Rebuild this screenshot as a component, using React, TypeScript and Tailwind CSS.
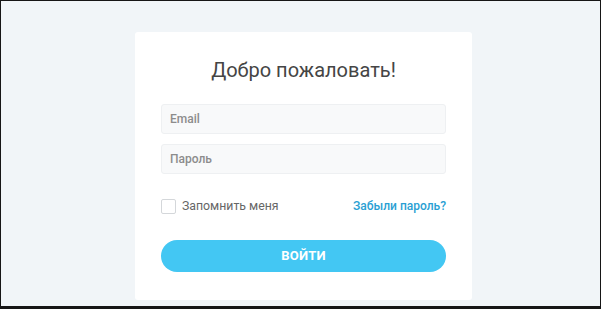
export default function App() {
  return (
    <div
      className="box-border w-[601px] h-[309px] border-t border-l border-r border-b-[3px] border-[#161616] bg-[#f1f5f8] pl-[134px] pt-[31px]"
      style={{ fontFamily: "Roboto, 'Noto Sans', sans-serif" }}
    >
      {/* Card */}
      <div className="w-[337px] h-[268px] bg-white rounded-[3px] px-[26px] pt-[24px]">
        <h1 className="text-[20px] leading-[28px] text-[#454545] text-center font-normal">
          Добро пожаловать!
        </h1>

        <div className="mt-[20px] flex flex-col gap-[10px]">
          <input
            type="email"
            placeholder="Email"
            className="h-[30px] w-full rounded-[3px] border border-[#eef0f2] bg-[#f8f9fa] px-[8px] text-[12px] font-medium text-[#555] placeholder:text-[#8c8c8c] outline-none"
          />
          <input
            type="password"
            placeholder="Пароль"
            className="h-[30px] w-full rounded-[3px] border border-[#eef0f2] bg-[#f8f9fa] px-[8px] text-[12px] font-medium text-[#555] placeholder:text-[#8c8c8c] outline-none"
          />
        </div>

        <div className="mt-[22px] h-[20px] flex items-center justify-between">
          <label className="flex items-center gap-[6px] text-[12.3px] text-[#666]">
            <span className="w-[15px] h-[15px] rounded-[2px] border border-[#d4d7da] bg-white" />
            Запомнить меня
          </label>
          <a className="text-[12px] font-medium text-[#2a9fd3]">Забыли пароль?</a>
        </div>

        <button className="mt-[24px] w-full h-[32px] rounded-full bg-[#43c7f3] text-white text-[13px] font-bold tracking-[0.2px]">
          ВОЙТИ
        </button>
      </div>
    </div>
  );
}
